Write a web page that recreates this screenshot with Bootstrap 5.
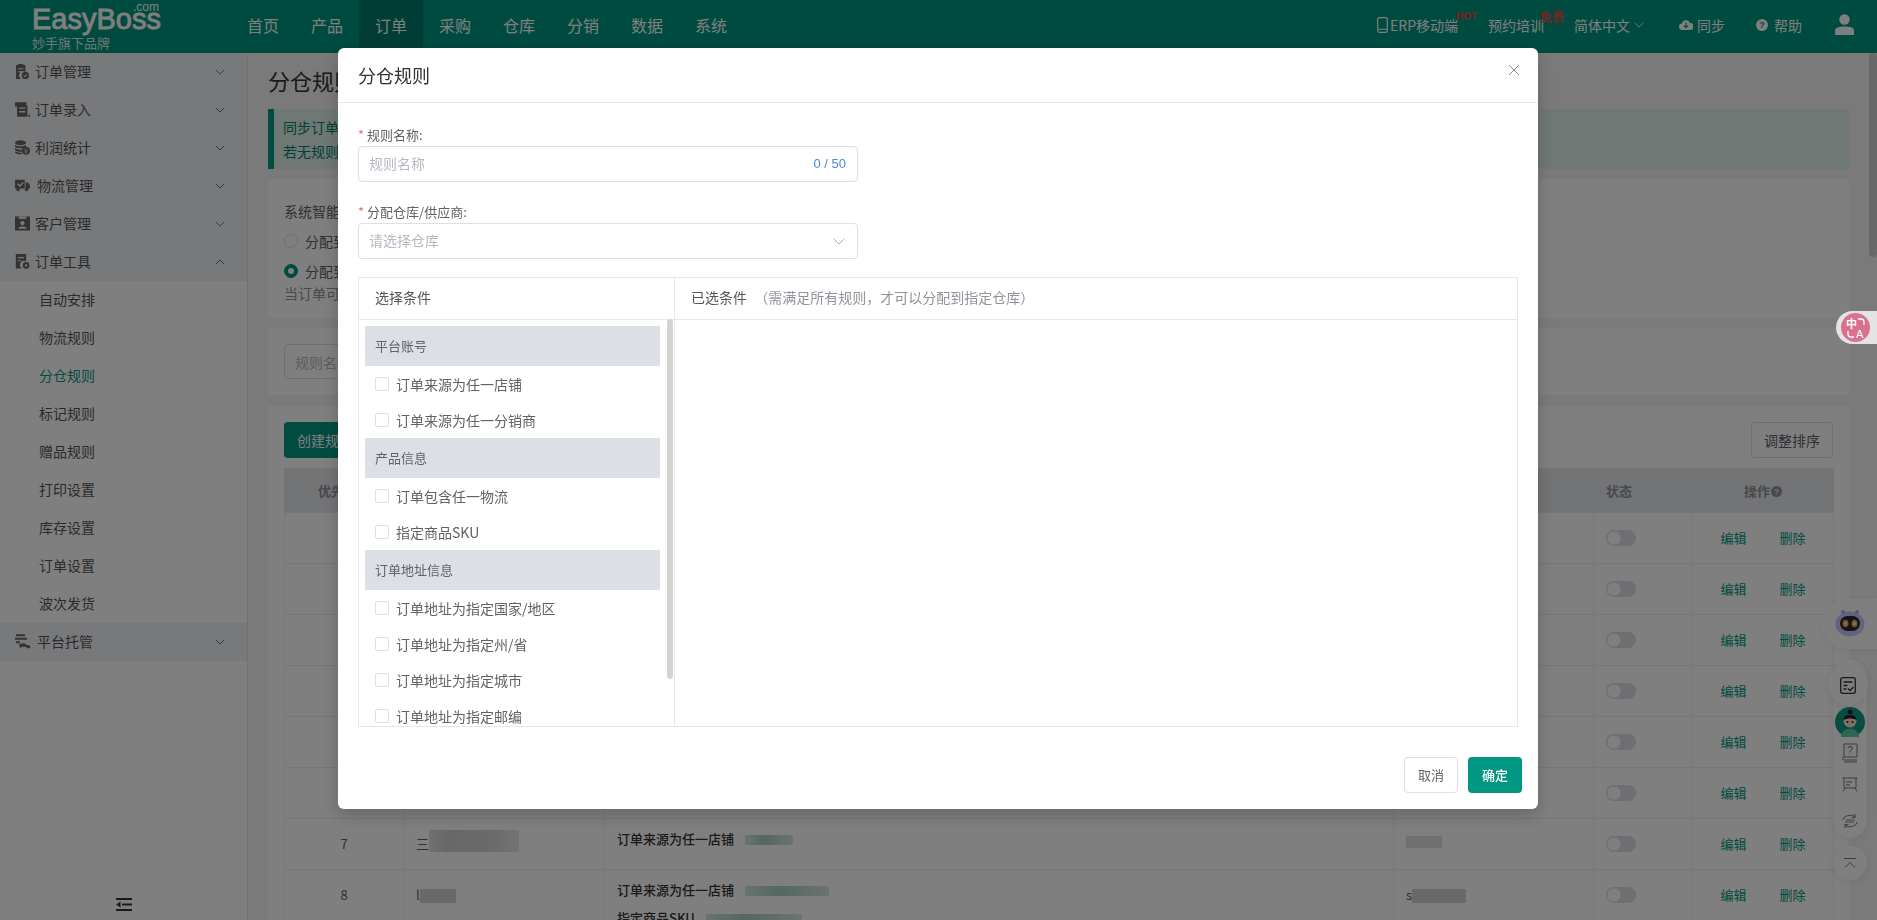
<!DOCTYPE html>
<html lang="zh-CN">
<head>
<meta charset="utf-8">
<title>分仓规则</title>
<link href="https://cdn.jsdelivr.net/npm/bootstrap@5.3.0/dist/css/bootstrap.min.css" rel="stylesheet">
<style>
:root{--brand:#009882;--line:#e4e7ed;--txt:#606266;}
html,body{height:100%;overflow:hidden;}
body{font-family:"Noto Sans CJK SC","Liberation Sans",sans-serif;font-size:14px;color:var(--txt);background:#f5f5f5;}
.shell{height:920px;}
.topbar{height:53px;background:#00967f;color:#fff;flex:none;}
.logo-wrap{width:231px;position:relative;height:53px;}
.logo-word{font:400 29px/20px "Liberation Sans",sans-serif;position:absolute;left:32px;top:9px;-webkit-text-stroke:.8px #fff;}
.logo-com{font:400 12px/8px "Liberation Sans",sans-serif;position:absolute;left:133px;top:3px;}
.logo-sub{font-size:13px;line-height:14px;position:absolute;left:32px;top:36px;color:#dcefeb;}
.tnav{width:64px;height:53px;font-size:16px;color:#fff;padding-bottom:4px;}
.tnav-on{background:#007a68;}
.hright{padding:0 23px 4px 0;}
.hlink{font-size:14px;color:#fff;position:relative;margin-left:30px;height:20px;line-height:20px;}
.hl-33{margin-left:33px;}
.hl-35{margin-left:35px;}
.hl-31{margin-left:31px;}
.hl-icon{margin-right:2px;}
.hl-gap{margin-right:6px;}
.hot-tag{position:absolute;color:#f0454a;font-weight:700;line-height:1;white-space:nowrap;}
.hot-a{left:79px;top:-3px;font:700 10px/1 "Liberation Sans",sans-serif;}
.hot-b{left:52px;top:-4px;font-size:12px;}
.side{width:248px;flex:none;background:#fff;border-right:1px solid #dfe3ea;}
.mhead{height:38px;background:#f0f3f7;color:#555;padding:0 22px 1px 15px;}
.mhead svg.ico{width:15px;height:15px;margin-right:5px;flex:none;}
.mhead .mlabel{flex:1;}
.mlabel-in{margin-left:2px;}
.msub{height:38px;line-height:37px;padding-left:39px;color:#555;}
.msub-on{color:var(--brand);}
.side-foot{padding-bottom:9px;}
.mainp{flex:1;min-width:0;padding:12px 28px 0 20px;overflow:hidden;}
.ptitle{font-size:22px;line-height:30px;margin:0 0 14px;font-weight:400;color:#333;}
.tip-bar{height:60px;border-left:6px solid #009882;background:#e0f0ea;color:#00806d;padding:6px 0 0 9px;line-height:24px;margin-bottom:10px;}
.pcard{background:#fff;padding:16px;margin-bottom:10px;border-radius:2px;}
.pc-a{height:139px;padding-top:22px;line-height:20px;}
.pc-a-note{margin-top:2px;color:#909399;}
.pc-b{height:67px;margin-bottom:11px;}
.pc-c{padding-bottom:0;}
.rad{gap:7px;height:20px;margin-top:10px;}
.rad .form-check-input{margin:0;width:14px;height:14px;border-color:#dcdfe6;}
.rad .form-check-input:checked{background-color:var(--brand);border-color:var(--brand);}
.fake-in{width:400px;height:35px;border:1px solid #dcdfe6;border-radius:4px;padding-left:10px;}
.fake-in::placeholder,.rule-in::placeholder{color:#b5b9c2;opacity:1;}
.btn-brand{background:var(--brand);color:#fff;border:0;height:36px;padding:0 13px;font-size:14px;border-radius:4px;}
.btn-plain{background:#fff;border:1px solid #dcdfe6;color:#606266;height:36px;font-size:14px;padding:0 12px;border-radius:4px;}
.rule-tb{table-layout:fixed;width:1549px;margin:10px 0 0;--bs-table-border-color:#ebeef5;font-size:13px;color:#606266;}
.rule-tb th{height:44px;background:#e6e8ec;font-weight:700;color:#909399;vertical-align:middle;padding:0 12px;border-color:#e0e2e8;}
.rule-tb td{height:51px;vertical-align:top;padding:15px 12px 0;line-height:20px;}
.rule-tb td.tp{padding-top:10px;}
.rule-tb td.sw-cell{padding-top:17px;}
.rule-tb .rule-name{font-weight:500;color:#333;}
.rule-tb .line2{margin-top:8px;}
.act-link{color:var(--brand);width:26px;display:inline-block;text-decoration:none;}
.act-gap{margin-left:33px;}
.sw.form-check-input{display:block;width:30px;height:16px;margin:0;background-color:#dcdfe6;border:0;border-radius:8px;background-image:url("data:image/svg+xml,%3csvg xmlns='http://www.w3.org/2000/svg' viewBox='-4 -4 8 8'%3e%3ccircle r='3.300' fill='%23fff'/%3e%3c/svg%3e");background-repeat:no-repeat;background-position:left center;background-size:contain;}
.smear{display:inline-block;height:12px;background:#dfe0e2;vertical-align:middle;}
.smear-tl{background:linear-gradient(90deg,#cfe6e1,#a9cfc7 40%,#d5e8e4);height:10px;}
.smear-dk{background:#d2d3d5;height:14px;}
.smear-big{height:22px;background:linear-gradient(90deg,#e2e3e5,#cfd0d2 20%,#d4d5d7 70%,#e8e9ea);vertical-align:top;margin-top:-4px;}
.smear-top{vertical-align:top;margin-top:2px;}
.q-mini{display:inline-block;width:11px;height:11px;vertical-align:-1px;margin-left:1px;}
.fl-tools{position:absolute;right:10px;top:660px;width:34px;height:178px;background:#fff;border-radius:17px;box-shadow:0 2px 8px rgba(0,0,0,.08);}
.fl-robot{position:absolute;right:0;top:599px;width:55px;height:50px;background:#fff;border-radius:25px 0 0 25px;box-shadow:0 2px 8px rgba(0,0,0,.06);}
.fl-task{position:absolute;left:1828px;top:665px;width:40px;height:40px;background:#fff;border-radius:50%;box-shadow:0 2px 8px rgba(0,0,0,.08);}
.fl-top{position:absolute;left:1833px;top:846px;width:34px;height:34px;background:#fff;border-radius:50%;box-shadow:0 2px 8px rgba(0,0,0,.08);}
.fl-svg{position:absolute;}
.thumb{position:absolute;right:0;top:53px;width:8px;height:204px;background:#d0d0d0;border-radius:4px;}
.modal.rule-modal{display:block;overflow:hidden;}
.modal-dialog.rule-dlg{max-width:1200px;width:1200px;margin:48px 0 0 338px;}
.rule-dlg .modal-content{height:761px;border:0;border-radius:6px;box-shadow:0 6px 18px rgba(0,0,0,.2);}
.rule-dlg .modal-header{height:55px;padding:0 20px 1px;border-bottom:1px solid var(--line);flex:none;}
.rule-dlg .modal-title{font-size:18px;font-weight:400;color:#303133;line-height:26px;}
.close-x{background:none;border:0;padding:0;margin:-10px -2px 0 0;width:12px;height:12px;line-height:0;}
.rule-dlg .modal-body{padding:22px 20px 0;flex:none;}
.req-lab{font-size:13px;line-height:20px;margin:0 0 1px;color:#606266;display:block;}
.req-lab i{font-style:normal;color:#f56c6c;margin-right:3px;}
.field{width:500px;height:36px;margin-bottom:20px;}
.rule-in,.rule-sel{height:36px;border:1px solid #dcdfe6;border-radius:4px;font-size:14px;padding:0 10px 2px;color:#b5b9c2;}
.rule-sel{background-image:url("data:image/svg+xml,%3csvg xmlns='http://www.w3.org/2000/svg' viewBox='0 0 12 7'%3e%3cpath d='M.7.7 6 6l5.3-5.3' fill='none' stroke='%23a8abb2' stroke-width='1'/%3e%3c/svg%3e");background-size:12px 7px;background-position:right 12px center;}
.count{position:absolute;right:12px;top:0;line-height:36px;font-size:13px;color:#4a86d8;font-family:"Liberation Sans",sans-serif;}
.cond-panel{width:1160px;height:450px;border:1px solid var(--line);margin-top:-2px;}
.cond-left{width:316px;flex:none;border-right:1px solid var(--line);position:relative;}
.cond-head{height:42px;line-height:39px;border-bottom:1px solid var(--line);padding-left:16px;color:#555;flex:none;}
.cond-list{height:407px;overflow:hidden;padding:6px 14px 0 6px;}
.cond-group{height:40px;line-height:40px;background:#dcdfe6;padding-left:10px;font-size:13px;color:#606266;}
.cond-item{height:36px;gap:7px;padding-left:10px;color:#606266;}
.cond-item .form-check-input{margin:0;width:14px;height:14px;border-radius:2px;border-color:#dcdfe6;}
.list-thumb{position:absolute;left:308px;top:41px;width:6px;height:360px;background:#d4d4d4;border-radius:3px;}
.sub-note{color:#909399;font-size:14px;margin-left:4px;}
.rule-dlg .modal-footer{border:0;padding:0 16px 16px 0;margin-top:auto;gap:10px;}
.rule-dlg .modal-footer>*{margin:0;}
.btn-cancel{width:54px;height:36px;padding:0;font-size:13px;color:#606266;background:#fff;border:1px solid #dcdfe6;border-radius:4px;}
.btn-ok{width:54px;height:36px;padding:0;font-size:13px;font-weight:500;color:#fff;background:var(--brand);border:0;border-radius:4px;}
.trans-pill{position:absolute;right:0;top:311px;width:41px;height:33px;background:#e4e4e4;border-radius:17px 0 0 17px;z-index:1060;}
.trans-dot{position:absolute;left:5px;top:2px;width:29px;height:29px;border-radius:50%;background:#d9718f;}
</style>
</head>
<body>
<svg width="0" height="0" class="position-absolute">
<symbol id="chev" viewBox="0 0 12 7"><path d="M1 1l5 5 5-5" fill="none" stroke="currentColor" stroke-width="1"/></symbol>
<symbol id="chevu" viewBox="0 0 12 7"><path d="M1 6l5-5 5 5" fill="none" stroke="currentColor" stroke-width="1"/></symbol>
<symbol id="i1" viewBox="3 1 12.500 14.500"><path fill="#666" d="M3 2h2V1h5v1h2v6.500A4 4 0 0 0 8 15.500H3z"/><path fill="#f0f3f7" d="M5 5h5v1H5zM5 8h4v1H5z"/><circle cx="12" cy="12" r="3.500" fill="#666"/><path d="M10.400 12l1.200 1.200 2-2" fill="none" stroke="#f0f3f7"/></symbol>
<symbol id="i2" viewBox="1 1 14.500 14"><path fill="#666" d="M1 1h11v3h1v11H3V5H1zM14 13h1.500v2H14z"/><path fill="#f0f3f7" d="M5 6h6v1.300H5zM5 9.500h6v1.300H5z"/></symbol>
<symbol id="i3" viewBox="1 .5 15 14.500"><ellipse cx="6.500" cy="3" rx="5.500" ry="2.500" fill="#666"/><path fill="#666" d="M1 5c2 2 9 2 11 0v2c-2 2-9 2-11 0zM1 8c2 2 6 2 7 2v2c-3 0-6 0-7-2zM1 11.500c2 1.500 5 1.500 7 1.500v1.500c-3 0-6 0-7-1.500z"/><circle cx="12" cy="11" r="4" fill="#666"/><path d="M10.500 9l1.500 2 1.500-2M12 11v3M10.500 12h3" stroke="#f0f3f7" stroke-width=".7" fill="none"/></symbol>
<symbol id="i4" viewBox="0 1.500 17 14"><path fill="#666" d="M0 2h11v10H0zM12 5h2.500L17 8v4h-5z"/><circle cx="3.500" cy="13" r="2" fill="#666"/><circle cx="13" cy="13" r="2" fill="#666"/><path d="M3 6.500l2.500 2.500 4-4" fill="none" stroke="#f0f3f7" stroke-width="1.500"/></symbol>
<symbol id="i5" viewBox="0 1 16 15"><path fill="#666" d="M0 1h16v15H0z"/><path fill="#f0f3f7" d="M4 1h8v2.500H4z"/><circle cx="8" cy="8" r="2.300" fill="#f0f3f7"/><path fill="#f0f3f7" d="M3.500 14c0-3 9-3 9 0z"/></symbol>
<symbol id="i6" viewBox="2 1 13 14.500"><path fill="#666" d="M2 1h10v7a4 4 0 0 0-4 7H2z"/><path fill="#f0f3f7" d="M4 4h6v1H4zM4 7h3v1H4z"/><circle cx="12" cy="12" r="2.200" fill="none" stroke="#666" stroke-width="2"/></symbol>
<symbol id="i7" viewBox="1 1 15 14.500"><path fill="#666" d="M2 1h9v2H2zM1 4.500h12v2H1zM2 8h4v2H2z"/><path fill="#666" d="M5 11l4-1c2 0 2 0 4 2h3v3h-2l-3-1.500H8L6 15z"/></symbol>
</svg>

<div class="shell d-flex flex-column">
  <header class="topbar d-flex align-items-center">
    <div class="logo-wrap">
      <span class="logo-word">EasyBoss</span>
      <span class="logo-com">.com</span>
      <span class="logo-sub">妙手旗下品牌</span>
    </div>
    <nav class="d-flex">
      <a class="tnav d-flex align-items-center justify-content-center text-decoration-none">首页</a>
      <a class="tnav d-flex align-items-center justify-content-center text-decoration-none">产品</a>
      <a class="tnav tnav-on d-flex align-items-center justify-content-center text-decoration-none">订单</a>
      <a class="tnav d-flex align-items-center justify-content-center text-decoration-none">采购</a>
      <a class="tnav d-flex align-items-center justify-content-center text-decoration-none">仓库</a>
      <a class="tnav d-flex align-items-center justify-content-center text-decoration-none">分销</a>
      <a class="tnav d-flex align-items-center justify-content-center text-decoration-none">数据</a>
      <a class="tnav d-flex align-items-center justify-content-center text-decoration-none">系统</a>
    </nav>
    <div class="ms-auto d-flex align-items-center hright">
      <div class="hlink d-flex align-items-center">
        <svg width="11" height="16" viewBox="0 0 11 16" class="hl-icon"><rect x=".7" y=".7" width="9.600" height="14.600" rx="1.500" fill="none" stroke="#fff" stroke-width="1.200"/><path d="M1 12.300h9" stroke="#fff"/></svg>
        <span>ERP移动端</span><span class="hot-tag hot-a">HOT</span>
      </div>
      <div class="hlink"><span>预约培训</span><span class="hot-tag hot-b">免费</span></div>
      <div class="hlink d-flex align-items-center">简体中文<svg width="10" height="6" class="ms-1"><use href="#chev"/></svg></div>
      <div class="hlink hl-35 d-flex align-items-center">
        <svg width="14" height="12" viewBox="0 0 14 12" class="me-1"><path fill="#fff" d="M3.500 11A3.200 3.200 0 0 1 3 4.600 4.200 4.200 0 0 1 11 4a3.500 3.500 0 0 1 0 7z"/><path d="M7 3.500v5M5 6.700l2 2 2-2" fill="none" stroke="#00967f" stroke-width="1.200"/></svg>
        <span>同步</span>
      </div>
      <div class="hlink hl-31 d-flex align-items-center">
        <svg width="12" height="12" viewBox="0 0 12 12" class="hl-gap"><circle cx="6" cy="6" r="6" fill="#fff"/><text x="6" y="9.300" text-anchor="middle" font-size="9" font-weight="700" font-family="Liberation Sans" fill="#00967f">?</text></svg>
        <span>帮助</span>
      </div>
      <div class="hlink hl-33 d-flex align-items-center">
        <svg width="19" height="21" viewBox="0 0 19 21"><circle cx="9.500" cy="5.500" r="5.200" fill="#fff"/><path fill="#fff" d="M0 21v-4.500C0 13.500 4 12.500 9.500 12.500s9.500 1 9.500 4V21z"/></svg>
      </div>
    </div>
  </header>

  <div class="d-flex flex-grow-1 overflow-hidden">
    <aside class="side d-flex flex-column">
      <div class="mhead d-flex align-items-center"><svg class="ico"><use href="#i1"/></svg><span class="mlabel">订单管理</span><svg width="10" height="6"><use href="#chev"/></svg></div>
      <div class="mhead d-flex align-items-center"><svg class="ico"><use href="#i2"/></svg><span class="mlabel">订单录入</span><svg width="10" height="6"><use href="#chev"/></svg></div>
      <div class="mhead d-flex align-items-center"><svg class="ico"><use href="#i3"/></svg><span class="mlabel">利润统计</span><svg width="10" height="6"><use href="#chev"/></svg></div>
      <div class="mhead d-flex align-items-center"><svg class="ico"><use href="#i4"/></svg><span class="mlabel mlabel-in">物流管理</span><svg width="10" height="6"><use href="#chev"/></svg></div>
      <div class="mhead d-flex align-items-center"><svg class="ico"><use href="#i5"/></svg><span class="mlabel">客户管理</span><svg width="10" height="6"><use href="#chev"/></svg></div>
      <div class="mhead d-flex align-items-center"><svg class="ico"><use href="#i6"/></svg><span class="mlabel">订单工具</span><svg width="10" height="6"><use href="#chevu"/></svg></div>
      <div class="msub">自动安排</div>
      <div class="msub">物流规则</div>
      <div class="msub msub-on">分仓规则</div>
      <div class="msub">标记规则</div>
      <div class="msub">赠品规则</div>
      <div class="msub">打印设置</div>
      <div class="msub">库存设置</div>
      <div class="msub">订单设置</div>
      <div class="msub">波次发货</div>
      <div class="mhead d-flex align-items-center"><svg class="ico"><use href="#i7"/></svg><span class="mlabel mlabel-in">平台托管</span><svg width="10" height="6"><use href="#chev"/></svg></div>
      <div class="mt-auto side-foot d-flex justify-content-center">
        <svg width="16" height="13" viewBox="0 0 16 13"><path fill="#333" d="M0 0h16v2H0zM6 5.500h10v2H6zM0 11h16v2H0zM4.500 3.500v6L0 6.500z"/></svg>
      </div>
    </aside>

    <main class="mainp">
      <h1 class="ptitle">分仓规则</h1>
      <div class="tip-bar">同步订单<br>若无规则</div>
      <div class="pcard pc-a">
        <div>系统智能</div>
        <div class="rad d-flex align-items-center"><input class="form-check-input" type="radio" name="mode"><span>分配到</span></div>
        <div class="rad d-flex align-items-center"><input class="form-check-input" type="radio" name="mode" checked><span>分配到</span></div>
        <div class="pc-a-note">当订单可</div>
      </div>
      <div class="pcard pc-b"><input class="fake-in" type="text" placeholder="规则名称"></div>
      <div class="pcard pc-c">
        <div class="d-flex justify-content-between">
          <button class="btn-brand">创建规则</button>
          <button class="btn-plain">调整排序</button>
        </div>
        <table class="table table-bordered rule-tb">
          <colgroup><col style="width:119px"><col style="width:201px"><col style="width:789px"><col style="width:200px"><col style="width:99px"><col style="width:141px"></colgroup>
          <thead><tr><th class="text-center">优先级别</th><th></th><th></th><th></th><th>状态</th><th class="text-center">操作<svg class="q-mini" viewBox="0 0 12 12"><circle cx="6" cy="6" r="6" fill="#909399"/><text x="6" y="9.500" text-anchor="middle" font-size="9" font-weight="700" font-family="Liberation Sans" fill="#e6e8ec">?</text></svg></th></tr></thead>
          <tbody>
            <tr><td></td><td></td><td></td><td></td><td class="sw-cell"><input class="form-check-input sw" type="checkbox" role="switch"></td><td class="text-center"><a class="act-link">编辑</a><a class="act-link act-gap">删除</a></td></tr>
            <tr><td></td><td></td><td></td><td></td><td class="sw-cell"><input class="form-check-input sw" type="checkbox" role="switch"></td><td class="text-center"><a class="act-link">编辑</a><a class="act-link act-gap">删除</a></td></tr>
            <tr><td></td><td></td><td></td><td></td><td class="sw-cell"><input class="form-check-input sw" type="checkbox" role="switch"></td><td class="text-center"><a class="act-link">编辑</a><a class="act-link act-gap">删除</a></td></tr>
            <tr><td></td><td></td><td></td><td></td><td class="sw-cell"><input class="form-check-input sw" type="checkbox" role="switch"></td><td class="text-center"><a class="act-link">编辑</a><a class="act-link act-gap">删除</a></td></tr>
            <tr><td></td><td></td><td></td><td></td><td class="sw-cell"><input class="form-check-input sw" type="checkbox" role="switch"></td><td class="text-center"><a class="act-link">编辑</a><a class="act-link act-gap">删除</a></td></tr>
            <tr><td></td><td></td><td></td><td></td><td class="sw-cell"><input class="form-check-input sw" type="checkbox" role="switch"></td><td class="text-center"><a class="act-link">编辑</a><a class="act-link act-gap">删除</a></td></tr>
            <tr><td class="text-center">7</td><td>三<span class="smear smear-big" style="width:90px"></span></td><td class="tp"><span class="rule-name">订单来源为任一店铺</span> <span class="smear smear-tl ms-2" style="width:48px"></span></td><td><span class="smear smear-top" style="width:36px"></span></td><td class="sw-cell"><input class="form-check-input sw" type="checkbox" role="switch"></td><td class="text-center"><a class="act-link">编辑</a><a class="act-link act-gap">删除</a></td></tr>
            <tr><td class="text-center">8</td><td>l<span class="smear smear-dk" style="width:36px"></span></td><td class="tp"><span class="rule-name">订单来源为任一店铺</span> <span class="smear smear-tl ms-2" style="width:84px"></span><div class="line2"><span class="rule-name">指定商品SKU</span> <span class="smear smear-tl ms-2" style="width:96px"></span></div></td><td>s<span class="smear smear-dk" style="width:54px"></span></td><td class="sw-cell"><input class="form-check-input sw" type="checkbox" role="switch"></td><td class="text-center"><a class="act-link">编辑</a><a class="act-link act-gap">删除</a></td></tr>
          </tbody>
        </table>
      </div>
    </main>
  </div>
</div>

<!-- floating widgets under the backdrop -->
<div class="thumb"></div>
<div class="fl-robot">
  <svg class="fl-svg" style="left:13px;top:9px" width="30" height="30" viewBox="0 0 30 30"><circle cx="8" cy="4" r="2" fill="#a5a8ff"/><circle cx="22" cy="4" r="2" fill="#a5a8ff"/><ellipse cx="15" cy="16" rx="14.500" ry="12.500" fill="#c3c6ff"/><rect x="5" y="8" width="20" height="15" rx="7.500" fill="#2f2630"/><ellipse cx="10.500" cy="15.500" rx="3" ry="3.800" fill="#e8a850"/><ellipse cx="19.500" cy="15.500" rx="3" ry="3.800" fill="#e8a850"/><circle cx="10.500" cy="15.500" r="1.500" fill="#ffe9b0"/><circle cx="19.500" cy="15.500" r="1.500" fill="#ffe9b0"/></svg>
</div>
<div class="fl-tools">
  <svg class="fl-svg" style="left:2px;top:47px" width="30" height="30" viewBox="0 0 30 30"><circle cx="15" cy="15" r="15" fill="#0f9b82"/><circle cx="15" cy="5" r="2.500" fill="#1c1c28"/><circle cx="15" cy="14" r="6.500" fill="#ffe0d0"/><path d="M8.500 13c0-7 13-7 13 0-4-2-9-2-13 0z" fill="#1c1c28"/><circle cx="12.500" cy="15" r="1" fill="#1c1c28"/><circle cx="17.500" cy="15" r="1" fill="#1c1c28"/><path d="M6 30c0-11 18-11 18 0z" fill="#5ecba6"/></svg>
  <svg class="fl-svg" style="left:9px;top:83px" width="16" height="20" viewBox="0 0 16 20" fill="none" stroke="#777"><path d="M2 14V1h13v13H2a1.500 1.500 0 0 0 0 3h13M2 19h13"/><text x="8" y="11" text-anchor="middle" font-size="10" font-family="Liberation Sans" fill="#777" stroke="none">?</text></svg>
  <svg class="fl-svg" style="left:9px;top:117px" width="16" height="16" viewBox="0 0 16 16" fill="none" stroke="#777"><path d="M.5 1h15M2 1v10h12V1M4 5h6M4 8h4M3 11l-2 3.500M13 11l2 3.500"/></svg>
  <svg class="fl-svg" style="left:9px;top:153px" width="16" height="16" viewBox="0 0 16 16" fill="none" stroke="#888" stroke-width="1.100"><path d="M1 7c1-5 9-6 12-3M13 1v3.500H9.500M15 9c-1 5-9 6-12 3M3 15v-3.500h3.500M4 7h9M3 9h9"/></svg>
</div>
<div class="fl-task"><svg class="fl-svg" style="left:12px;top:12px" width="16" height="17" viewBox="0 0 16 17" fill="none" stroke="#333" stroke-width="1.300"><rect x=".7" y=".7" width="14.600" height="15.600" rx="2"/><path d="M3.500 5h9M3.500 8.500h4M3.500 12h3M8 11.500l2 2 3.500-3.500"/></svg></div>
<div class="fl-top"><svg class="fl-svg" style="left:11px;top:12px" width="12" height="11" viewBox="0 0 12 11" fill="none" stroke="#777"><path d="M0 .5h12M1 9.500l5-5 5 5"/></svg></div>

<div class="modal-backdrop fade show"></div>

<div class="modal rule-modal" role="dialog">
  <div class="modal-dialog rule-dlg">
    <div class="modal-content">
      <div class="modal-header">
        <h5 class="modal-title">分仓规则</h5>
        <button class="close-x ms-auto" aria-label="Close"><svg width="12" height="12" viewBox="0 0 12 12"><path d="M1 1l10 10M11 1L1 11" stroke="#8a8d93" stroke-width="1"/></svg></button>
      </div>
      <div class="modal-body">
        <label class="req-lab"><i>*</i>规则名称:</label>
        <div class="field position-relative">
          <input class="form-control rule-in" type="text" placeholder="规则名称">
          <span class="count">0 / 50</span>
        </div>
        <label class="req-lab"><i>*</i>分配仓库/供应商:</label>
        <div class="field">
          <select class="form-select rule-sel"><option>请选择仓库</option></select>
        </div>
        <div class="cond-panel d-flex">
          <div class="cond-left d-flex flex-column">
            <div class="cond-head">选择条件</div>
            <div class="cond-list">
              <div class="cond-group">平台账号</div>
              <div class="cond-item d-flex align-items-center"><input class="form-check-input" type="checkbox"><span>订单来源为任一店铺</span></div>
              <div class="cond-item d-flex align-items-center"><input class="form-check-input" type="checkbox"><span>订单来源为任一分销商</span></div>
              <div class="cond-group">产品信息</div>
              <div class="cond-item d-flex align-items-center"><input class="form-check-input" type="checkbox"><span>订单包含任一物流</span></div>
              <div class="cond-item d-flex align-items-center"><input class="form-check-input" type="checkbox"><span>指定商品SKU</span></div>
              <div class="cond-group">订单地址信息</div>
              <div class="cond-item d-flex align-items-center"><input class="form-check-input" type="checkbox"><span>订单地址为指定国家/地区</span></div>
              <div class="cond-item d-flex align-items-center"><input class="form-check-input" type="checkbox"><span>订单地址为指定州/省</span></div>
              <div class="cond-item d-flex align-items-center"><input class="form-check-input" type="checkbox"><span>订单地址为指定城市</span></div>
              <div class="cond-item d-flex align-items-center"><input class="form-check-input" type="checkbox"><span>订单地址为指定邮编</span></div>
            </div>
            <div class="list-thumb"></div>
          </div>
          <div class="flex-grow-1">
            <div class="cond-head">已选条件 <span class="sub-note">（需满足所有规则，才可以分配到指定仓库）</span></div>
          </div>
        </div>
      </div>
      <div class="modal-footer">
        <button class="btn-cancel">取消</button>
        <button class="btn-ok">确定</button>
      </div>
    </div>
  </div>
</div>

<div class="trans-pill"><div class="trans-dot d-flex align-items-center justify-content-center">
  <svg width="22" height="22" viewBox="0 0 22 22" fill="none" stroke="#fff" stroke-width="1.300"><text x="1" y="11" font-size="11" font-weight="700" font-family="Noto Sans CJK SC" fill="#fff" stroke="none">中</text><text x="11" y="20.500" font-size="11" font-family="Liberation Sans" fill="#fff" stroke="none">A</text><path d="M13 2h3c1.500 0 3 1 3 3v3M3 14v3c0 1.500 1 3 3 3h3"/></svg>
</div></div>
</body>
</html>
